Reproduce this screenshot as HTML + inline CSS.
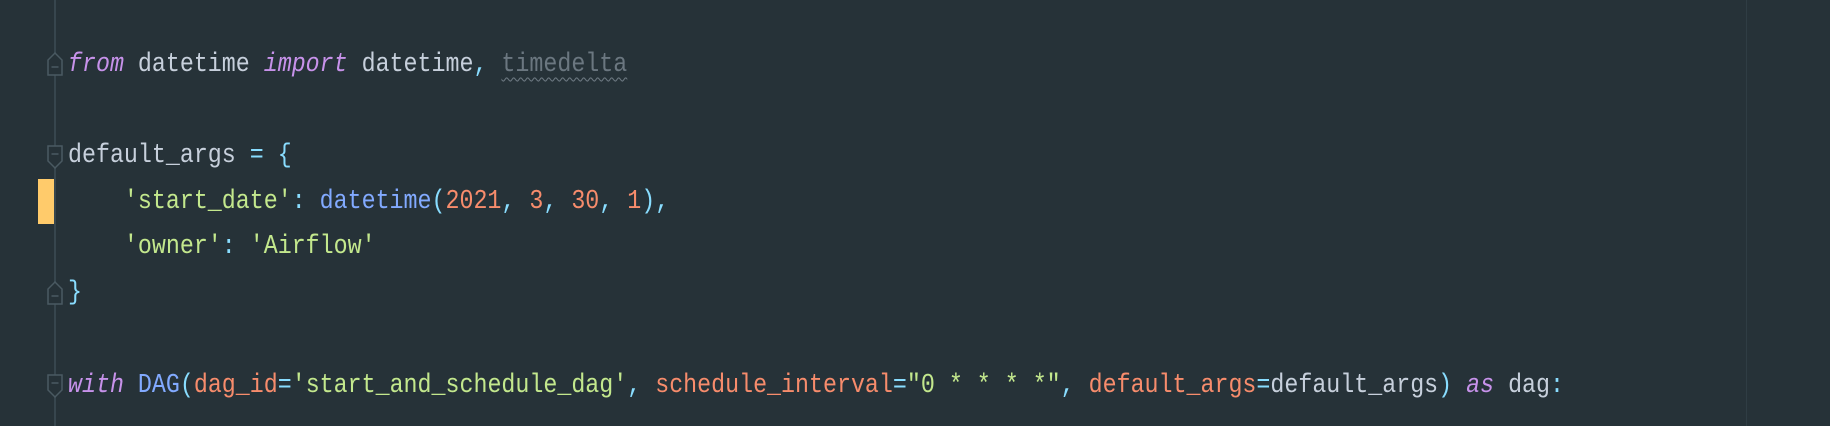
<!DOCTYPE html>
<html><head><style>
html,body{margin:0;padding:0;background:#263238;width:1830px;height:426px;overflow:hidden;position:relative}
.l{position:absolute;left:68px;font-family:"Liberation Mono",monospace;font-size:23.3px;color:#c7d0dc;white-space:pre;line-height:30px;transform:scaleY(1.15);transform-origin:0 50%}
.k{color:#c792ea;font-style:italic}.s{color:#c3e88d}.n{color:#f78c6c}.f{color:#82aaff}.p{color:#89ddff}.g{color:#6b7780;text-decoration:underline wavy #6b7780;text-underline-offset:5px;text-decoration-thickness:1px}
.vl{position:absolute;left:54px;top:0;width:2px;height:426px;background:#37464e}
.rl{position:absolute;left:1746px;top:0;width:1px;height:426px;background:#2f3d44}
.fold{position:absolute;left:46px}
</style></head><body>
<div class="vl"></div><div class="rl"></div>
<div style="position:absolute;left:38px;top:179px;width:16px;height:45px;background:#ffcb6b"></div>
<svg class="fold" style="top:51px" width="18" height="26"><path d="M2 24V9L9 2L16 9V24Z" fill="#263238" stroke="#4a5a62" stroke-width="1.5"/><path d="M5.5 16H12.5" stroke="#4a5a62" stroke-width="1.5"/></svg>
<svg class="fold" style="top:144px" width="18" height="26"><path d="M2 2V17L9 24L16 17V2Z" fill="#263238" stroke="#4a5a62" stroke-width="1.5"/><path d="M5.5 10H12.5" stroke="#4a5a62" stroke-width="1.5"/></svg>
<svg class="fold" style="top:280px" width="18" height="26"><path d="M2 24V9L9 2L16 9V24Z" fill="#263238" stroke="#4a5a62" stroke-width="1.5"/><path d="M5.5 16H12.5" stroke="#4a5a62" stroke-width="1.5"/></svg>
<svg class="fold" style="top:373px" width="18" height="26"><path d="M2 2V17L9 24L16 17V2Z" fill="#263238" stroke="#4a5a62" stroke-width="1.5"/><path d="M5.5 10H12.5" stroke="#4a5a62" stroke-width="1.5"/></svg>
<div class="l" style="top:49px"><span class="k">from</span> datetime <span class="k">import</span> datetime<span class="p">,</span> <span class="g">timedelta</span></div>
<div class="l" style="top:140px">default_args <span class="p">=</span> <span class="p">{</span></div>
<div class="l" style="top:186px">    <span class="s">'start_date'</span><span class="p">:</span> <span class="f">datetime</span><span class="p">(</span><span class="n">2021</span><span class="p">,</span> <span class="n">3</span><span class="p">,</span> <span class="n">30</span><span class="p">,</span> <span class="n">1</span><span class="p">),</span></div>
<div class="l" style="top:231px">    <span class="s">'owner'</span><span class="p">:</span> <span class="s">'Airflow'</span></div>
<div class="l" style="top:277px"><span class="p">}</span></div>
<div class="l" style="top:370px"><span class="k">with</span> <span class="f">DAG</span><span class="p">(</span><span class="n">dag_id</span><span class="p">=</span><span class="s">'start_and_schedule_dag'</span><span class="p">,</span> <span class="n">schedule_interval</span><span class="p">=</span><span class="s">"0 * * * *"</span><span class="p">,</span> <span class="n">default_args</span><span class="p">=</span>default_args<span class="p">)</span> <span class="k">as</span> dag<span class="p">:</span></div>
</body></html>
